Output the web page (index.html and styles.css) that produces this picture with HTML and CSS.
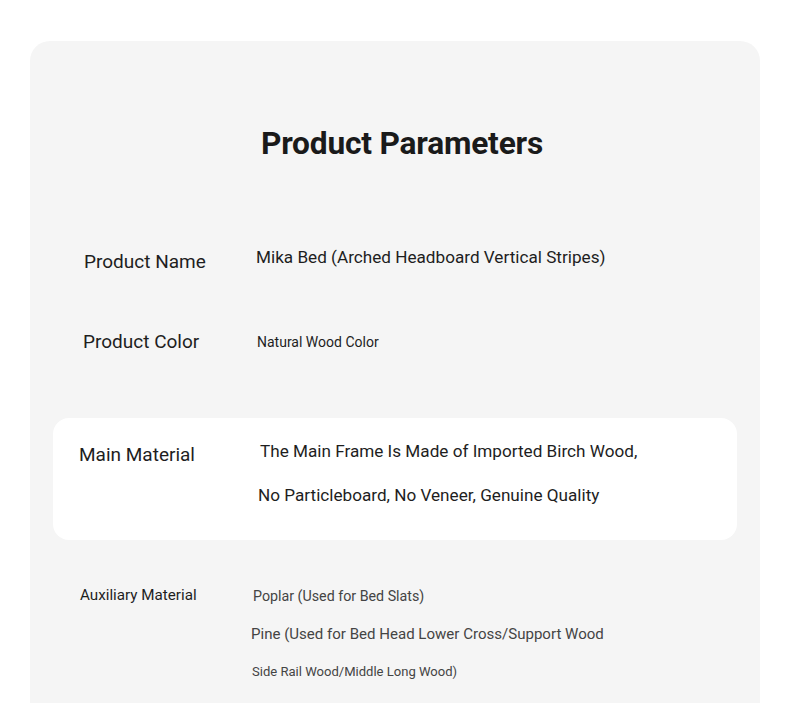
FILE: index.html
```html
<!DOCTYPE html>
<html lang="en">
<head>
<meta charset="utf-8">
<title>Product Parameters</title>
<link rel="stylesheet" href="styles.css">
</head>
<body>
<div class="card">
  <h1 class="title">Product Parameters</h1>
  <div class="row row-name">
    <div class="label">Product Name</div>
    <div class="value">Mika Bed (Arched Headboard Vertical Stripes)</div>
  </div>
  <div class="row row-color">
    <div class="label">Product Color</div>
    <div class="value small">Natural Wood Color</div>
  </div>
  <div class="box">
    <div class="label">Main Material</div>
    <div class="value multi">
      <div class="first">The Main Frame Is Made of Imported Birch Wood,</div>
      <div>No Particleboard, No Veneer, Genuine Quality</div>
    </div>
  </div>
  <div class="row row-aux">
    <div class="label aux-label">Auxiliary Material</div>
    <div class="value aux">
      <div class="a1">Poplar (Used for Bed Slats)</div>
      <div class="a2">Pine (Used for Bed Head Lower Cross/Support Wood</div>
      <div class="a3">Side Rail Wood/Middle Long Wood)</div>
    </div>
  </div>
</div>
</body>
</html>
```
FILE: styles.css
```css
html, body {
  margin: 0;
  padding: 0;
  background: #ffffff;
}
body {
  font-family: Roboto, "Liberation Sans", Arial, sans-serif;
  color: #1e1e1e;
  height: 703px;
  overflow: hidden;
}
.card {
  margin: 41px 30px 0;
  background: #f5f5f5;
  border-radius: 20px 20px 0 0;
  padding-top: 85px;
  height: 662px;
  box-sizing: border-box;
}
.title {
  margin: 0;
  font-size: 31.7px;
  line-height: 36px;
  font-weight: 700;
  text-align: center;
  color: #1a1a1a;
  padding-left: 14px;
  letter-spacing: -0.2px;
}
.row {
  display: flex;
  align-items: flex-start;
}
.label {
  font-size: 19px;
  line-height: 24px;
  color: #1e1e1e;
  flex: none;
}
.value {
  font-size: 17.15px;
  line-height: 24px;
  color: #1e1e1e;
}
.row-name {
  margin-top: 83px;
  padding-left: 54px;
}
.row-name .label {
  width: 172px;
  padding-top: 5px;
}
.row-color {
  margin-top: 56px;
  padding-left: 53px;
}
.row-color .label {
  width: 174px;
}
.value.small {
  font-size: 14px;
}
.box {
  margin: 64px 23px 0;
  height: 122px;
  background: #ffffff;
  border-radius: 16px;
  display: flex;
  align-items: flex-start;
  padding-left: 26px;
  box-sizing: border-box;
}
.box .label {
  width: 179px;
  padding-top: 25px;
}
.value.multi {
  padding-top: 11px;
  line-height: 44px;
}
.value.multi .first {
  padding-left: 2px;
}
.row-aux {
  margin-top: 37px;
  padding-left: 50px;
}
.aux-label {
  width: 173px;
  font-size: 15.2px;
  line-height: 20px;
  padding-top: 8px;
}
.value.aux {
  color: #444444;
  line-height: 38px;
}
.a1 {
  font-size: 14.25px;
}
.a2 {
  font-size: 15.05px;
  margin-left: -2px;
}
.a3 {
  font-size: 13.05px;
  margin-left: -1px;
}
```
